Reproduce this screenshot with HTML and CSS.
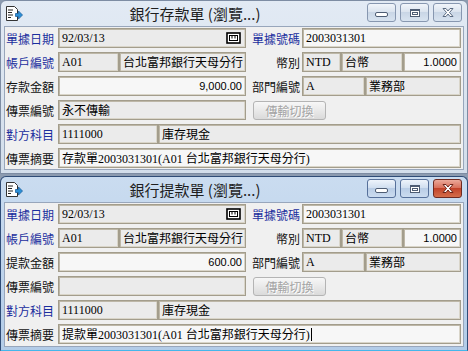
FILE: index.html
```html
<!DOCTYPE html>
<html lang="zh-Hant">
<head>
  <meta charset="UTF-8">
  <title>銀行存提款單</title>
  <link rel="stylesheet" href="styles.css">
</head>
<body>

  <div class="window">
    <div class="titlebar">
      <svg class="app-icon" width="18" height="16" viewBox="0 0 18 16">
        <path d="M1.5 .5h8l3 3v11h-11z" fill="#fff" stroke="#333"/>
        <path d="M3 4h5M3 6.5h4M3 9h5M3 11.5h3" stroke="#222"/>
        <path d="M10.5 7.5h3v-2.5l4 4-4 4v-2.5h-3z" fill="#2b8fd6" stroke="#1d5f9e" stroke-width=".8"/>
      </svg>
      <div class="title">銀行存款單 (瀏覽...)</div>
      <div class="controls">
        <span class="cbtn"><span class="g-min"></span></span>
        <span class="cbtn"><span class="g-max"></span></span>
        <span class="cbtn close">
          <svg width="14" height="11" viewBox="0 0 14 11"><path d="M2 1.5h3l2 2.5 2-2.5h3l-3.5 4 3.5 4h-3l-2-2.5-2 2.5h-3l3.5-4z" fill="#fff" stroke="#5b6b82"/></svg>
        </span>
      </div>
    </div>
    <div class="client">
      <div class="row">
        <span class="lbl key">單據日期</span>
        <div class="fld w188">92/03/13
          <svg class="cal" width="15" height="12" viewBox="0 0 15 12"><rect x="1" y="1" width="13" height="10" fill="#fff" stroke="#000" stroke-width="1.6"/><rect x="3.5" y="3.5" width="8" height="5" fill="none" stroke="#000"/><path d="M6 3.5v3M9 3.5v3" stroke="#000"/></svg>
        </div>
        <span class="lbl2 key">單據號碼</span>
        <div class="fld edit w159">2003031301</div>
      </div>
      <div class="row">
        <span class="lbl key">帳戶編號</span>
        <div class="fld w61">A01</div>
        <div class="fld w127">台北富邦銀行天母分行</div>
        <span class="lbl2">幣別</span>
        <div class="fld w39">NTD</div>
        <div class="fld w62">台幣</div>
        <div class="fld edit num w58">1.0000</div>
      </div>
      <div class="row">
        <span class="lbl">存款金額</span>
        <div class="fld edit num w188">9,000.00</div>
        <span class="lbl2">部門編號</span>
        <div class="fld w63">A</div>
        <div class="fld w96">業務部</div>
      </div>
      <div class="row">
        <span class="lbl">傳票編號</span>
        <div class="fld w188">永不傳輸</div>
        <span class="btn">傳輸切換</span>
      </div>
      <div class="row">
        <span class="lbl key">對方科目</span>
        <div class="fld w100">1111000</div>
        <div class="fld w303">庫存現金</div>
      </div>
      <div class="row">
        <span class="lbl">傳票摘要</span>
        <div class="fld edit w403">存款單2003031301(A01 台北富邦銀行天母分行)</div>
      </div>
    </div>
  </div>

  <div class="window active">
    <div class="titlebar">
      <svg class="app-icon" width="18" height="16" viewBox="0 0 18 16">
        <path d="M1.5 .5h8l3 3v11h-11z" fill="#fff" stroke="#333"/>
        <path d="M3 4h5M3 6.5h4M3 9h5M3 11.5h3" stroke="#222"/>
        <path d="M10.5 7.5h3v-2.5l4 4-4 4v-2.5h-3z" fill="#2b8fd6" stroke="#1d5f9e" stroke-width=".8"/>
      </svg>
      <div class="title">銀行提款單 (瀏覽...)</div>
      <div class="controls">
        <span class="cbtn"><span class="g-min"></span></span>
        <span class="cbtn"><span class="g-max"></span></span>
        <span class="cbtn close">
          <svg width="14" height="11" viewBox="0 0 14 11"><path d="M2 1.5h3l2 2.5 2-2.5h3l-3.5 4 3.5 4h-3l-2-2.5-2 2.5h-3l3.5-4z" fill="#fff" stroke="#6e2418"/></svg>
        </span>
      </div>
    </div>
    <div class="client">
      <div class="row">
        <span class="lbl key">單據日期</span>
        <div class="fld w188">92/03/13
          <svg class="cal" width="15" height="12" viewBox="0 0 15 12"><rect x="1" y="1" width="13" height="10" fill="#fff" stroke="#000" stroke-width="1.6"/><rect x="3.5" y="3.5" width="8" height="5" fill="none" stroke="#000"/><path d="M6 3.5v3M9 3.5v3" stroke="#000"/></svg>
        </div>
        <span class="lbl2 key">單據號碼</span>
        <div class="fld edit w159">2003031301</div>
      </div>
      <div class="row">
        <span class="lbl key">帳戶編號</span>
        <div class="fld w61">A01</div>
        <div class="fld w127">台北富邦銀行天母分行</div>
        <span class="lbl2">幣別</span>
        <div class="fld w39">NTD</div>
        <div class="fld w62">台幣</div>
        <div class="fld edit num w58">1.0000</div>
      </div>
      <div class="row">
        <span class="lbl">提款金額</span>
        <div class="fld edit num w188">600.00</div>
        <span class="lbl2">部門編號</span>
        <div class="fld w63">A</div>
        <div class="fld w96">業務部</div>
      </div>
      <div class="row">
        <span class="lbl">傳票編號</span>
        <div class="fld w188"></div>
        <span class="btn">傳輸切換</span>
      </div>
      <div class="row">
        <span class="lbl key">對方科目</span>
        <div class="fld w100">1111000</div>
        <div class="fld w303">庫存現金</div>
      </div>
      <div class="row">
        <span class="lbl">傳票摘要</span>
        <div class="fld edit w403">提款單2003031301(A01 台北富邦銀行天母分行)<span class="caret"></span></div>
      </div>
    </div>
  </div>

</body>
</html>
```

FILE: styles.css
```css
body {
  margin: 0;
  width: 468px;
  height: 351px;
  overflow: hidden;
  background: #8c9bb0;
  font-family: "Noto Sans CJK TC", sans-serif;
  font-size: 12px;
}
.window {
  box-sizing: border-box;
  width: 468px;
  height: 174px;
  border: 1px solid #7d8ca3;
  border-radius: 6px 6px 0 0;
  padding: 0 3px 3px;
  background: linear-gradient(#e2eaf4, #d3deeb);
  display: flex;
  flex-direction: column;
}
.window.active {
  height: 175px;
  margin-top: 2px;
  border-color: #2f4c77;
  border-bottom-color: #45b6ea;
  background: linear-gradient(#cadcf0, #b3cce8);
}
.titlebar {
  height: 25px;
  flex: none;
  display: flex;
  align-items: flex-start;
}
.app-icon {
  margin: 5px 0 0 1px;
}
.title {
  flex: 1;
  text-align: center;
  font-size: 15px;
  line-height: 25px;
  color: #1e1e1e;
}
.controls {
  display: flex;
  gap: 4px;
  margin: 2px 2px 0 0;
}
.cbtn {
  box-sizing: border-box;
  width: 29px;
  height: 19px;
  border: 1px solid #8797b0;
  border-radius: 3px;
  background: linear-gradient(#f1f5fa, #dbe4ef 45%, #c9d6e6 50%, #d8e3f0);
  display: flex;
  align-items: center;
  justify-content: center;
}
.active .cbtn {
  border-color: #56709a;
  background: linear-gradient(#eef4fb, #d1dff0 45%, #b9cde6 50%, #cbdcf0);
}
.active .cbtn.close {
  border-color: #6e2a21;
  background: linear-gradient(#eba99a, #d9715c 45%, #c2432a 50%, #d46d4a);
}
.g-min {
  width: 11px;
  height: 3px;
  margin-top: 3px;
  border: 1px solid #4e5d74;
  border-radius: 2px;
  background: #fff;
}
.g-max {
  box-sizing: border-box;
  width: 10px;
  height: 8px;
  border: 1px solid #4e5d74;
  border-top-width: 2px;
  background: #fff;
  box-shadow: inset 0 0 0 1px #fff, inset 0 0 0 2px #4e5d74;
}
.client {
  flex: 1;
  background: #f0f0f0;
  border: 1px solid #98a6bb;
  padding: 1px 0 0 1px;
  display: flex;
  flex-direction: column;
  gap: 4px;
}
.row {
  display: flex;
  align-items: center;
  height: 20px;
}
.lbl {
  width: 52px;
  flex: none;
  color: #111;
  white-space: nowrap;
}
.lbl2 {
  width: 56px;
  flex: none;
  box-sizing: border-box;
  padding-right: 2px;
  text-align: right;
  color: #111;
  white-space: nowrap;
}
.key {
  color: #1b2e9e;
}
.fld {
  box-sizing: border-box;
  flex: none;
  height: 20px;
  border: 1px solid #a39d8c;
  box-shadow: inset 1px 1px 0 #bdb7a7, inset -1px -1px 0 #d9d5c9;
  background: #ebebeb;
  padding: 0 3px;
  display: flex;
  align-items: center;
  font-family: "Liberation Serif", "Noto Sans CJK TC", serif;
  font-size: 12px;
  color: #000;
  white-space: nowrap;
  overflow: hidden;
}
.fld.edit {
  background: #f7f7f7;
}
.fld.num {
  justify-content: flex-end;
  font-family: "Liberation Sans", sans-serif;
  font-size: 11px;
}
.cal {
  margin-left: auto;
  margin-right: 1px;
}
.caret {
  display: inline-block;
  width: 1px;
  height: 13px;
  margin-left: 1px;
  background: #000;
}
.btn {
  box-sizing: border-box;
  width: 73px;
  height: 19px;
  margin-left: 7px;
  border: 1px solid #b4b4b4;
  border-radius: 3px;
  background: linear-gradient(#f7f7f7, #e9e9e9 50%, #dadada);
  color: #a3a3a3;
  text-shadow: 1px 1px 0 #fff;
  display: flex;
  align-items: center;
  justify-content: center;
}
.w39 { width: 39px; }
.w58 { width: 58px; }
.w61 { width: 61px; }
.w62 { width: 62px; }
.w63 { width: 63px; }
.w96 { width: 96px; }
.w100 { width: 100px; }
.w127 { width: 127px; }
.w159 { width: 159px; }
.w188 { width: 188px; }
.w303 { width: 303px; }
.w403 { width: 403px; }
```
